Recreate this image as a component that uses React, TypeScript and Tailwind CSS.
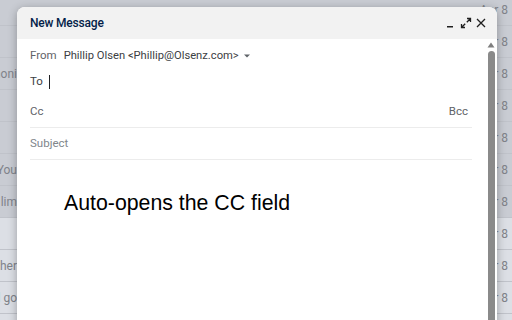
const rows = [
  { left: "", dark: true },
  { left: "", dark: true },
  { left: "Testimoni", dark: true },
  { left: "", dark: true },
  { left: "", dark: true },
  { left: "Thank You", dark: true },
  { left: "Your lim", dark: true },
  { left: "", dark: false },
  { left: "Together", dark: false },
  { left: "Good go", dark: false },
  { left: "", dark: false },
];

const Inbox = () => (
  <div className="flex flex-col -mt-[6px]">
    {rows.map((row, i) => (
      <div
        key={i}
        className={`h-[32px] flex items-center justify-between border-b border-[#c0c3ca] text-[12px] text-[#80838a] ${row.dark ? "bg-[#c9ccd3]" : "bg-[#dcdfe5]"}`}
      >
        <div className="w-[17px] overflow-hidden flex justify-end whitespace-nowrap">
          <span>{row.left}</span>
        </div>
        <span className="pr-[4px]">Apr 8</span>
      </div>
    ))}
  </div>
);

const HeaderIcons = () => (
  <div className="flex items-center gap-[3px] text-[#1f1f1f]">
    <svg width="12" height="12" viewBox="0 0 12 12" className="mr-[1px]">
      <path d="M3 9.8h6" stroke="currentColor" strokeWidth="1.5" />
    </svg>
    <svg width="12" height="12" viewBox="0 0 12 12" fill="none" stroke="currentColor" strokeWidth="1.3">
      <path d="M7 1.5h3.5V5M10.5 1.5L6.8 5.2M5 10.5H1.5V7M1.5 10.5l3.7-3.7" />
    </svg>
    <svg width="12" height="12" viewBox="0 0 12 12" fill="none" stroke="currentColor" strokeWidth="1.3">
      <path d="M2 2l8 8M10 2l-8 8" />
    </svg>
  </div>
);

export default function App() {
  return (
    <div className="w-[512px] h-[320px] relative overflow-hidden bg-[#c9ccd3] font-['Roboto',sans-serif]">
      <Inbox />
      <div className="absolute left-[17px] top-[7px] w-[480px] h-[330px] bg-white rounded-t-[8px] overflow-hidden shadow-[0_2px_10px_rgba(0,0,0,0.3)] flex flex-col">
        <div className="h-[32px] shrink-0 bg-[#f2f2f2] flex items-center justify-between pl-[13px] pr-[10px]">
          <span className="text-[12px] font-medium tracking-[-0.2px] text-[#041e49]">New Message</span>
          <HeaderIcons />
        </div>
        <div className="flex flex-1">
          <div className="w-[442px] ml-[13px] pt-[8px] flex flex-col text-[11.5px]">
            <div className="h-[18px] flex items-center gap-[7px]">
              <span className="text-[#5f6368]">From</span>
              <span className="text-[#3c4043] text-[11.2px]">Phillip Olsen &lt;Phillip@Olsenz.com&gt;</span>
              <svg width="8" height="6" viewBox="0 0 8 6" className="ml-[-3px]">
                <path d="M1 1.5h6L4 4.5z" fill="#5f6368" />
              </svg>
            </div>
            <div className="h-[18px] mt-[8px] flex items-center gap-[6px]">
              <span className="text-[#3c4043]">To</span>
              <span className="w-[1px] h-[14px] bg-[#202124]" />
            </div>
            <div className="h-[32px] mt-[5px] flex items-center justify-between border-b border-[#ececec] pr-[4px] text-[#5f6368]">
              <span>Cc</span>
              <span>Bcc</span>
            </div>
            <div className="h-[32px] flex items-center border-b border-[#ececec] text-[#80868b]">
              <span>Subject</span>
            </div>
            <div className="mt-[30px] pl-[34px] text-[21.3px] leading-[26px] text-black font-['Liberation_Sans',Arial,sans-serif]">
              Auto-opens the CC field
            </div>
          </div>
          <div className="ml-[15px] w-[8px] flex flex-col items-center pt-[3px]">
            <svg width="8" height="6" viewBox="0 0 8 6">
              <path d="M4 0.5L7.5 5.5h-7z" fill="#7f7f7f" />
            </svg>
            <div className="mt-[3px] w-[7px] flex-1 bg-[#8a8a8a] rounded-t-[4px]" />
          </div>
        </div>
      </div>
    </div>
  );
}
